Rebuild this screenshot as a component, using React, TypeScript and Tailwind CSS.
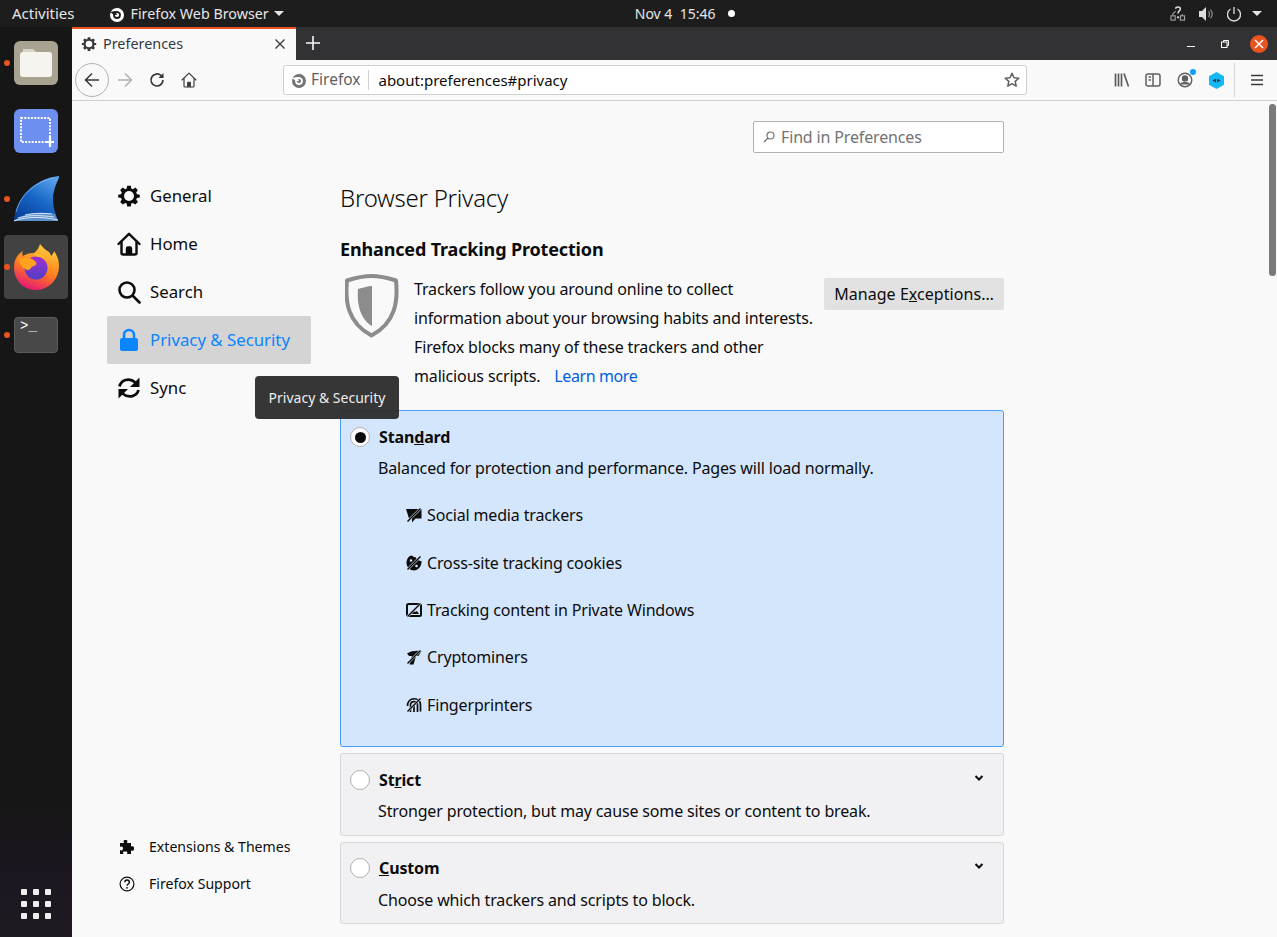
import { ReactNode } from "react";

const font = { fontFamily: '"Noto Sans", sans-serif' };

function GearIcon({ size = 24, color = "#0c0c0d" }: { size?: number; color?: string }) {
  return (
    <svg width={size} height={size} viewBox="0 0 24 24" fill={color}>
      <path d="M10 1h4l.6 3.2 1.700.7L19 3.100 21.800 5.900 20 8.600l.8 1.800L24 11v3l-3.200.6-.8 1.800 1.900 2.700-2.900 2.800-2.700-1.800-1.700.7L14 24h-4l-.6-3.200-1.700-.7L5 21.900 2.200 19.100 4 16.400l-.8-1.800L0 14v-3l3.200-.6.800-1.800L2.200 5.900 5 3.100l2.700 1.800 1.700-.7z" transform="translate(1.200 .8) scale(.9)" />
      <circle cx="12" cy="12" r="5" fill="#f9f9fa" />
    </svg>
  );
}

function HomeIcon({ size = 24, color = "#0c0c0d", sw = 2.4 }: { size?: number; color?: string; sw?: number }) {
  return (
    <svg width={size} height={size} viewBox="0 0 24 24" fill="none" stroke={color} strokeWidth={sw} strokeLinejoin="round" strokeLinecap="round">
      <path d="M1.500 12 12 1.800 22.500 12" />
      <path d="M4.500 10v11a1.500 1.500 0 0 0 1.500 1.500h12a1.500 1.500 0 0 0 1.500-1.500V10" />
      <path d="M10 22v-5.500a1 1 0 0 1 1-1h2a1 1 0 0 1 1 1V22" fill={color} />
    </svg>
  );
}

function FirefoxGlyph({ size = 16, color = "#fff", bg = "#1d1d1d" }: { size?: number; color?: string; bg?: string }) {
  return (
    <svg width={size} height={size} viewBox="0 0 16 16">
      <circle cx="8" cy="9" r="7" fill={color} />
      <circle cx="8" cy="9" r="3" fill="none" stroke={bg} strokeWidth="1.800" />
      <path d="M1 6 5 9h3L6 5z" fill={bg} />
      <path d="M9.500 0C9 2 10 3 12 4l2 3-4-1-1-2z" fill={color} />
    </svg>
  );
}

function SlashWrap({ children }: { children: ReactNode }) {
  return (
    <svg width="16" height="16" viewBox="0 0 16 16" className="shrink-0">
      {children}
      <path d="M0 16 16 0" stroke="#d4e6fb" strokeWidth="2.400" />
      <path d="M1.500 14.500 14.500 1.500" stroke="#0c0c0d" strokeWidth="1.400" />
    </svg>
  );
}

function SocialIcon() {
  return (
    <SlashWrap>
      <path d="M0 2h15.500v9.500H9.500L6 15.500v-4H3z" fill="#0c0c0d" />
    </SlashWrap>
  );
}

function CookieIcon() {
  return (
    <SlashWrap>
      <path d="M6 .5c1 1 2 2 3.500 1.500C10 3.500 11 4.500 12.500 4.500 13 5.500 14 6 15.500 6 16 11 12 15.500 8 15.500s-7.500-3.500-7.500-7.500 2.500-7.500 5.500-7.500z" fill="#0c0c0d" />
      <circle cx="5" cy="5.500" r="1.300" fill="#d4e6fb" />
      <circle cx="10.500" cy="11" r="1.300" fill="#d4e6fb" />
    </SlashWrap>
  );
}

function ContentIcon() {
  return (
    <SlashWrap>
      <rect x="1" y="2" width="14" height="12" rx="1.500" fill="none" stroke="#0c0c0d" strokeWidth="2" />
      <path d="M3 12 7 8l2 2 2-1 2 3z" fill="#0c0c0d" />
    </SlashWrap>
  );
}

function MinerIcon() {
  return (
    <SlashWrap>
      <path d="M1 4.500c4-2.500 9-3 14.500-2.500l-3 5H10L7.500 15.500H3.500L6 7H3z" fill="#0c0c0d" />
    </SlashWrap>
  );
}

function FingerprintIcon() {
  return (
    <SlashWrap>
      <g fill="none" stroke="#0c0c0d" strokeWidth="1.700">
        <path d="M1.500 9c0-9.500 13-9.500 13-1v6.500" />
        <path d="M4.500 15V8c0-4.500 7-4.500 7 0v7" />
        <path d="M8 8v7" />
      </g>
    </SlashWrap>
  );
}

function Radio({ checked }: { checked?: boolean }) {
  return (
    <span className="flex h-5 w-5 shrink-0 items-center justify-center rounded-full border border-[#b1b1b3] bg-white">
      {checked && <span className="h-[11px] w-[11px] rounded-full bg-[#0c0c0d]" />}
    </span>
  );
}

function Chevron() {
  return (
    <svg width="10" height="8" viewBox="0 0 10 8" fill="none" stroke="#0c0c0d" strokeWidth="2">
      <path d="M1.500 2 5 5.500 8.500 2" />
    </svg>
  );
}

function NavItem({ icon, label, active }: { icon: ReactNode; label: string; active?: boolean }) {
  return (
    <div className={`flex h-12 items-center rounded-[2px] pl-[10px] ${active ? "bg-[#d4d4d4] text-[#0a84ff]" : "text-[#0c0c0d]"}`}>
      <span className="flex w-[33px] shrink-0">{icon}</span>
      <span className="text-[16.800px]">{label}</span>
    </div>
  );
}

function Tracker({ icon, label }: { icon: ReactNode; label: string }) {
  return (
    <div className="flex h-[47.400px] items-center gap-[5px] pl-[65px]">
      {icon}
      <span>{label}</span>
    </div>
  );
}

function Dock() {
  return (
    <aside className="relative flex w-[72px] shrink-0 flex-col items-center bg-[linear-gradient(to_bottom,#171616_85%,#1b1620_93%,#201a22_100%)]">
      <div className="absolute left-[4px] top-[33px] h-[6px] w-[6px] rounded-full bg-[#e95420]" />
      <div className="absolute left-[4px] top-[169px] h-[6px] w-[6px] rounded-full bg-[#e95420]" />
      <div className="absolute left-[4px] top-[237px] z-10 h-[6px] w-[6px] rounded-full bg-[#e95420]" />
      <div className="absolute left-[4px] top-[305px] h-[6px] w-[6px] rounded-full bg-[#e95420]" />

      <div className="mt-[14px] flex h-[44px] w-[44px] items-center justify-center rounded-[6px] bg-[#a8a290]">
        <svg width="32" height="28" viewBox="0 0 32 28">
          <path d="M3 0h10l3 3H3z" fill="#d9d5ca" />
          <rect x="0" y="3" width="32" height="25" rx="3" fill="#f6f4ef" />
        </svg>
      </div>

      <div className="mt-[24px] flex h-[44px] w-[44px] items-center justify-center rounded-[6px] bg-[#6d8ff0]">
        <svg width="36" height="32" viewBox="0 0 36 32" fill="none" stroke="#fff">
          <rect x="3" y="3" width="29" height="24" strokeWidth="2" strokeDasharray="2 1.300" />
          <path d="M32 22v10M27 27h9" strokeWidth="2.200" />
        </svg>
      </div>

      <div className="mt-[23px]">
        <svg width="46" height="46" viewBox="0 0 46 46">
          <defs>
            <linearGradient id="fin" x1="0.800" y1="0" x2="0.200" y2="1">
              <stop offset="0" stopColor="#5aa2ea" />
              <stop offset="0.500" stopColor="#1766c7" />
              <stop offset="1" stopColor="#0a3f9a" />
            </linearGradient>
          </defs>
          <path d="M1 45C3 22 20 3 46 0c1 2-6 10-6 24 0 8 3 15 5 21z" fill="url(#fin)" />
          <path d="M3 36C7 20 20 7 40 2" fill="none" stroke="#8fc0f2" strokeWidth="1" opacity=".7" />
          <path d="M1 45c8-7 24-10 41-7l3 7z" fill="#5d8fc8" />
          <path d="M1 45c10-4 28-5 44-1M5 42c10-3 22-3 36-1M12 39c8-2 18-2 27-1" fill="none" stroke="#d6e6f5" strokeWidth="1" />
        </svg>
      </div>

      <div className="mt-[13px] flex h-[64px] w-[64px] items-center justify-center rounded-[4px] bg-[#424242]">
        <svg width="46" height="46" viewBox="0 0 46 46">
          <defs>
            <linearGradient id="fx" x1="0.700" y1="0" x2="0.300" y2="1">
              <stop offset="0" stopColor="#ffd23a" />
              <stop offset="0.550" stopColor="#ff7a1f" />
              <stop offset="1" stopColor="#e3127a" />
            </linearGradient>
            <linearGradient id="fxc" x1="0.500" y1="0" x2="0.500" y2="1">
              <stop offset="0" stopColor="#a42ed1" />
              <stop offset="1" stopColor="#4f3fc6" />
            </linearGradient>
          </defs>
          <path d="M1 23C1 15 5 10 10 7c-1 2-1 3 0 5 3-2 6-3 11-3C25 6 26 3 27 0c4 5 6 6 9 8 1 1 2 3 2 4 2-2 3-4 3-5 3 4 5 9 5 15 0 13-10 24-23 24S1 36 1 23z" fill="url(#fx)" />
          <circle cx="23" cy="24" r="11.500" fill="url(#fxc)" />
          <path d="M6 15c5-2 12-2 16 2 2 2 2 4-1 5-4 1-3 4-6 4-5-1-9-6-9-11z" fill="#ffa31f" />
          <path d="M22 10c8-1 14 5 15 14 0-6-4-10-10-11-3 0-5-1-5-3z" fill="#ffbd2e" />
        </svg>
      </div>

      <div className="mt-[18px] flex h-[36px] w-[44px] flex-col rounded-[4px] border border-[#5c5c5c] bg-[#484848] px-[5px] pt-[1px]">
        <span className="text-[14px] leading-[14px] text-white" style={{ fontFamily: '"Liberation Mono", monospace' }}>
          &gt;_
        </span>
      </div>

      <div className="mt-auto mb-[18px] grid grid-cols-3 gap-[6px]">
        {Array.from({ length: 9 }).map((_, i) => (
          <span key={i} className="h-[6px] w-[6px] rounded-[1px] bg-[#eeeeee]" />
        ))}
      </div>
    </aside>
  );
}

export default function App() {
  return (
    <div className="relative flex h-[937px] w-[1277px] flex-col overflow-hidden bg-[#f9f9fa] text-[16px] text-[#0c0c0d]" style={font}>
      {/* ubuntu top bar */}
      <header className="flex h-[27px] shrink-0 items-center bg-[#1d1d1d] text-[14px] text-[#e6e6e6]">
        <span className="ml-[12px] text-[15px]">Activities</span>
        <span className="ml-[34px] flex items-center">
          <FirefoxGlyph />
          <span className="ml-[6px] text-[14.300px]">Firefox Web Browser</span>
          <span className="ml-[5px] h-0 w-0 border-x-[5px] border-t-[5px] border-x-transparent border-t-[#e6e6e6]" />
        </span>
        <span className="ml-[351px] flex items-center">
          Nov 4&nbsp;&nbsp;15:46
          <span className="ml-[13px] h-[7px] w-[7px] rounded-full bg-white" />
        </span>
        <span className="ml-auto mr-[15px] flex items-center gap-[12px]">
          <svg width="16" height="17" viewBox="0 0 17 17" fill="none" stroke="#aaa" strokeWidth="1.100">
            <rect x="1" y="11" width="4.500" height="4.500" />
            <rect x="11" y="11" width="4.500" height="4.500" />
            <path d="M3 11V9l3-3M13 11V9" />
            <path d="M6 3.500C6 1 11 1 11 3.500 11 6 8.500 5.500 8.500 8.500" stroke="#ddd" strokeWidth="1.600" />
            <circle cx="8.500" cy="12.500" r="1.200" fill="#ddd" stroke="none" />
          </svg>
          <svg width="16" height="16" viewBox="0 0 16 16" fill="#ddd">
            <path d="M1 5h3l4-4v14l-4-4H1z" />
            <path d="M10.500 5c1.200 1.800 1.200 4.200 0 6M12.500 3.500c2 2.600 2 6.400 0 9" fill="none" stroke="#999" strokeWidth="1.100" />
          </svg>
          <svg width="16" height="16" viewBox="0 0 16 16" fill="none" stroke="#ddd" strokeWidth="1.300">
            <path d="M4.500 3a6.500 6.500 0 1 0 7 0" />
            <path d="M8 1v7" />
          </svg>
          <span className="ml-[-2px] h-0 w-0 border-x-[5px] border-t-[5px] border-x-transparent border-t-[#e6e6e6]" />
        </span>
      </header>

      <div className="flex min-h-0 flex-1">
        <Dock />

        <div className="relative flex min-w-0 flex-1 flex-col">
          {/* tab strip */}
          <div className="flex h-[33px] shrink-0 items-stretch bg-[#323234]">
            <div className="flex w-[224px] items-center border-t-2 border-[#e95420] bg-[#f9f9fa] pb-[2px] pl-[9px] pr-[10px] text-[14.400px] text-[#38383d]">
              <GearIcon size={16} color="#38383d" />
              <span className="ml-[6px]">Preferences</span>
              <svg className="ml-auto" width="12" height="12" viewBox="0 0 12 12" stroke="#38383d" strokeWidth="1.300">
                <path d="M1.500 1.500l9 9M10.500 1.500l-9 9" />
              </svg>
            </div>
            <div className="ml-[10px] flex items-center pb-[1px]">
              <svg width="14" height="14" viewBox="0 0 14 14" stroke="#f9f9fa" strokeWidth="1.600">
                <path d="M7 0v14M0 7h14" />
              </svg>
            </div>
            <div className="ml-auto mr-[9px] flex items-center">
              <span className="mt-[5px] h-[1px] w-2 bg-white" />
              <svg className="ml-[26px]" width="8" height="8" viewBox="0 0 8 8" fill="none" stroke="#fff">
                <rect x=".5" y="2" width="5.500" height="5.500" />
                <path d="M2.500 2V.5h5v5H6" />
              </svg>
              <span className="ml-[21px] flex h-[18px] w-[18px] items-center justify-center rounded-full bg-[#e95420]">
                <svg width="10" height="10" viewBox="0 0 10 10" stroke="#fff" strokeWidth="1.500">
                  <path d="M1 1l8 8M9 1 1 9" />
                </svg>
              </span>
            </div>
          </div>

          {/* toolbar */}
          <div className="relative flex h-[41px] shrink-0 items-center border-b border-[#cfcfd1] bg-[#f9f9fa] pl-[3px]">
            <span className="flex h-[34px] w-[34px] items-center justify-center rounded-full border border-[#b1b1b3] bg-[#f9f9fa]">
              <svg width="16" height="16" viewBox="0 0 16 16" fill="none" stroke="#38383d" strokeWidth="1.500">
                <path d="M15 8H1.500M8 1.500 1.500 8 8 14.500" />
              </svg>
            </span>
            <svg className="ml-[8px]" width="16" height="16" viewBox="0 0 16 16" fill="none" stroke="#b1b1b3" strokeWidth="1.500">
              <path d="M1 8h13.500M8 1.500 14.500 8 8 14.500" />
            </svg>
            <svg className="ml-[16px]" width="16" height="16" viewBox="0 0 16 16" fill="none" stroke="#38383d" strokeWidth="1.700">
              <path d="M14 8a6 6 0 1 1-1.800-4.300L14 5.500" />
              <path d="M14.500 1v5h-5" strokeWidth="1.500" fill="#38383d" stroke="none" />
            </svg>
            <span className="ml-[16px]">
              <HomeIcon size={16} color="#38383d" sw={1.700} />
            </span>
            <div className="ml-[86px] flex h-[30px] w-[744px] items-center rounded-[3px] border border-[#cfcfd1] bg-white pl-[7px] pr-[6px] text-[15px]">
              <FirefoxGlyph color="#737373" bg="#ffffff" />
              <span className="ml-[4px] text-[15.500px] text-[#5f5f63]">Firefox</span>
              <span className="ml-[8px] mr-[9px] h-[20px] w-px bg-[#d0d0d2]" />
              <span className="text-[#0c0c0d]">about:preferences#privacy</span>
              <svg className="ml-auto" width="16" height="16" viewBox="0 0 16 16" fill="none" stroke="#5f5f63" strokeWidth="1.500" strokeLinejoin="round">
                <path d="M8 1.300 10 5.700l4.800.5-3.600 3.200 1 4.700L8 11.700l-4.200 2.400 1-4.700L1.200 6.200 6 5.700z" />
              </svg>
            </div>
            <div className="ml-[87px] flex items-center">
              <svg width="16" height="16" viewBox="0 0 16 16" fill="none" stroke="#5f5f63" strokeWidth="1.700">
                <path d="M1.500 1.500v13M4.500 1.500v13M7.500 1.500v13M10 1.500l4.500 13" />
              </svg>
              <svg className="ml-[15px]" width="16" height="16" viewBox="0 0 16 16" fill="none" stroke="#5f5f63" strokeWidth="1.500">
                <rect x="1" y="2" width="14" height="12" rx="2" />
                <path d="M8 2v12M3.500 5h2.500M3.500 8h2.500" />
              </svg>
              <span className="relative ml-[16px] flex">
                <svg width="16" height="16" viewBox="0 0 16 16" fill="none" stroke="#5f5f63" strokeWidth="1.400">
                  <circle cx="8" cy="8" r="6.800" />
                  <circle cx="8" cy="6.500" r="2.500" fill="#5f5f63" />
                  <path d="M3.500 12.500c1-2.500 8-2.500 9 0" fill="#5f5f63" />
                </svg>
                <span className="absolute right-[-3px] top-[-3px] h-[6px] w-[6px] rounded-full bg-[#0a9eff]" />
              </span>
              <svg className="ml-[16px]" width="15" height="17" viewBox="0 0 16 18">
                <path d="M8 0l8 4.500v9L8 18l-8-4.500v-9z" fill="#14b8f5" />
                <path d="M3.500 9l4-2v4zM12.500 9l-4-2v4z" fill="#2a3a4a" />
              </svg>
              <span className="ml-[10px] h-[34px] w-px bg-[#d7d7db]" />
              <svg className="ml-[15px]" width="14" height="14" viewBox="0 0 14 14" stroke="#38383d" strokeWidth="1.500">
                <path d="M1 2.500h12M1 7h12M1 11.500h12" />
              </svg>
            </div>
          </div>

          {/* preferences page */}
          <div className="flex min-h-0 flex-1 bg-[#f9f9fa]">
            <nav className="ml-[35px] flex w-[204px] shrink-0 flex-col justify-between pt-[71px] pb-[45px]">
              <div className="flex flex-col">
                <NavItem label="General" icon={<GearIcon />} />
                <NavItem label="Home" icon={<HomeIcon />} />
                <NavItem
                  label="Search"
                  icon={
                    <svg width="24" height="24" viewBox="0 0 24 24" fill="none" stroke="#0c0c0d" strokeWidth="2.600" strokeLinecap="round">
                      <circle cx="10" cy="10" r="7.500" />
                      <path d="m16 16 6.500 6.500" />
                    </svg>
                  }
                />
                <NavItem
                  active
                  label="Privacy & Security"
                  icon={
                    <svg width="24" height="24" viewBox="0 0 24 24">
                      <path d="M7 11V7a5 5 0 0 1 10 0v4" fill="none" stroke="#0a84ff" strokeWidth="2.500" />
                      <rect x="3" y="10" width="18" height="13" rx="2" fill="#0a84ff" />
                    </svg>
                  }
                />
                <NavItem
                  label="Sync"
                  icon={
                    <svg width="24" height="24" viewBox="0 0 24 24" fill="none" stroke="#0c0c0d" strokeWidth="2.800">
                      <path d="M2.500 10.500C4 4 12 1 18.500 6.500L21 9" />
                      <path d="M22.500 1.500v9.500H13" fill="#0c0c0d" stroke="none" />
                      <path d="M21.500 14C20 20 12 23 5.500 17.500L3 15" />
                      <path d="M1.500 22.500V13H11" fill="#0c0c0d" stroke="none" />
                    </svg>
                  }
                />
              </div>
              <div className="flex flex-col gap-[21px] pl-[12px] text-[14.100px]">
                <div className="flex h-4 items-center">
                  <svg width="16" height="16" viewBox="0 0 16 16" fill="#0c0c0d" className="mr-[14px]">
                    <path d="M1 4h4C4 1 5 1 6.500 1S9 1 8 4h4v3.500c3-1 3 .5 3 2s0 3-3 2V15H8c1-2.500-.5-2.500-2-2.500s-2.500 0-1.500 2.500H1v-4c2 1 3 0 3-1.500S3 7 1 8z" />
                  </svg>
                  Extensions &amp; Themes
                </div>
                <div className="flex h-4 items-center">
                  <svg width="16" height="16" viewBox="0 0 16 16" fill="none" stroke="#0c0c0d" strokeWidth="1.200" className="mr-[14px]">
                    <circle cx="8" cy="8" r="6.900" />
                    <path d="M5.800 6.300c0-3 4.600-3 4.600 0 0 1.800-2.300 1.700-2.300 3.500" strokeWidth="1.400" />
                    <circle cx="8" cy="11.800" r=".9" fill="#0c0c0d" stroke="none" />
                  </svg>
                  Firefox Support
                </div>
              </div>
            </nav>

            <main className="ml-[29px] flex w-[664px] shrink-0 flex-col pt-[20px] tracking-[-0.15px]">
              <div className="flex h-[32px] w-[251px] items-center self-end rounded-[2px] border border-[#b1b1b3] bg-white pl-[9px] text-[#737373]">
                <svg width="12" height="12" viewBox="0 0 12 12" fill="none" stroke="#737373" strokeWidth="1.200">
                  <circle cx="7.500" cy="4.500" r="3.500" />
                  <path d="M5 7 1 11" />
                </svg>
                <span className="ml-[6px]">Find in Preferences</span>
              </div>

              <h1 className="mt-[27px] text-[24px] font-light leading-[36px] tracking-[-0.25px]">Browser Privacy</h1>
              <h2 className="mt-[20px] text-[18px] font-bold leading-[27px]">Enhanced Tracking Protection</h2>

              <div className="mt-[12px] flex">
                <svg width="54" height="64" viewBox="0 0 54 64" className="ml-[5px] mt-[-1px] shrink-0">
                  <path d="M26.500 2C35 2 43 4 51 6.500c2 20 0 42-24.500 55C2 48.500 0 26.500 2 6.500 10 4 18 2 26.500 2z" fill="none" stroke="#8c8c8c" strokeWidth="4" strokeLinejoin="round" />
                  <path d="M27 12v40C14 44 12 28 13 15c5-1 9-3 14-3z" fill="#8c8c8c" />
                </svg>
                <p className="ml-[15px] w-[410px] leading-[29px]">
                  Trackers follow you around online to collect information about your browsing habits and interests. Firefox blocks many of these trackers and other malicious scripts.
                  <span className="ml-[14px] inline-block tracking-[-0.4px] text-[#0060df]">Learn more</span>
                </p>
                <button className="mt-[3px] flex h-[32px] w-[180px] shrink-0 items-center justify-center rounded-[2px] bg-[#e1e1e2] tracking-[0.05px]">
                  <span>
                    Manage E<span className="underline">x</span>ceptions…
                  </span>
                </button>
              </div>

              <section className="mt-[19px] h-[337px] rounded-[3px] border border-[#4a9df5] bg-[#d4e6fb] pt-[16px]">
                <div className="flex h-5 items-center gap-[9px] pl-[9px] font-bold">
                  <Radio checked />
                  <span>
                    Stan<span className="underline">d</span>ard
                  </span>
                </div>
                <p className="mt-[9px] pl-[37px] leading-[24px]">Balanced for protection and performance. Pages will load normally.</p>
                <div className="mt-[11.500px] flex flex-col">
                  <Tracker icon={<SocialIcon />} label="Social media trackers" />
                  <Tracker icon={<CookieIcon />} label="Cross-site tracking cookies" />
                  <Tracker icon={<ContentIcon />} label="Tracking content in Private Windows" />
                  <Tracker icon={<MinerIcon />} label="Cryptominers" />
                  <Tracker icon={<FingerprintIcon />} label="Fingerprinters" />
                </div>
              </section>

              <section className="mt-[6px] h-[83px] rounded-[3px] border border-[#d7d7db] bg-[#f1f1f3] pt-[16px]">
                <div className="flex h-5 items-center gap-[9px] pl-[9px] pr-[19px]">
                  <Radio />
                  <span className="font-bold">
                    St<span className="underline">r</span>ict
                  </span>
                  <span className="mb-[5px] ml-auto">
                    <Chevron />
                  </span>
                </div>
                <p className="mt-[9px] pl-[37px] leading-[24px]">Stronger protection, but may cause some sites or content to break.</p>
              </section>

              <section className="mt-[6px] h-[82px] rounded-[3px] border border-[#d7d7db] bg-[#f1f1f3] pt-[15px]">
                <div className="flex h-5 items-center gap-[9px] pl-[9px] pr-[19px]">
                  <Radio />
                  <span className="font-bold">
                    <span className="underline">C</span>ustom
                  </span>
                  <span className="mb-[4px] ml-auto">
                    <Chevron />
                  </span>
                </div>
                <p className="mt-[10px] pl-[37px] leading-[24px]">Choose which trackers and scripts to block.</p>
              </section>
            </main>

            {/* scrollbar */}
            <div className="ml-auto flex w-[10px] shrink-0 justify-center pt-[3px]">
              <span className="h-[172px] w-[7px] rounded-full bg-[#7a7a7a]" />
            </div>
          </div>

          {/* tooltip */}
          <div className="absolute left-[183px] top-[349px] flex h-[43px] w-[144px] items-center justify-center rounded-[4px] bg-[#2b2b2b]/95 text-[14px] text-[#eeeeee]">
            Privacy &amp; Security
          </div>
        </div>
      </div>
    </div>
  );
}
